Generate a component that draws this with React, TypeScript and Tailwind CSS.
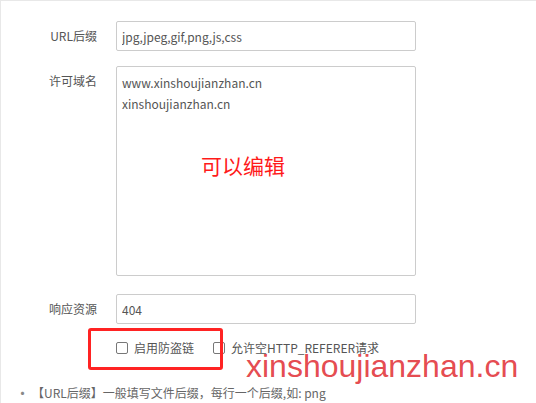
export default function App() {
  return (
    <div className="relative w-[536px] h-[403px] overflow-hidden bg-white border-t border-l border-[#e8e8e8] font-['Noto_Sans_CJK_SC',sans-serif] text-[12px] text-[#555]">
      <div className="flex flex-col pt-[20px]">
        {/* URL suffix */}
        <div className="flex items-start">
          <label className="w-[96px] text-right leading-[30px]">URL后缀</label>
          <input
            className="ml-[19px] w-[300px] h-[30px] border border-[#ccc] rounded-[2px] px-[5px] text-[#555] outline-none"
            defaultValue="jpg,jpeg,gif,png,js,css"
          />
        </div>

        {/* allowed domains */}
        <div className="flex items-start mt-[15px]">
          <label className="w-[96px] text-right leading-[30px]">许可域名</label>
          <div className="relative ml-[19px]">
            <textarea
              className="block w-[300px] h-[210px] border border-[#ccc] rounded-[2px] px-[5px] pt-[5px] leading-[21px] text-[#555] outline-none resize-none"
              defaultValue={"www.xinshoujianzhan.cn\nxinshoujianzhan.cn"}
            />
            <span className="absolute left-[85px] top-[89px] text-[21px] text-[#ff1a1a] leading-none">可以编辑</span>
          </div>
        </div>

        {/* response */}
        <div className="flex items-start mt-[18px]">
          <label className="w-[96px] text-right leading-[30px]">响应资源</label>
          <input
            className="ml-[19px] w-[300px] h-[30px] border border-[#ccc] rounded-[2px] px-[5px] text-[#555] outline-none"
            defaultValue="404"
          />
        </div>

        {/* options */}
        <div className="flex items-center mt-[15px] pl-[115px] h-[17px]">
          <span className="w-[12px] h-[12px] border border-[#777] rounded-[2px]" />
          <span className="ml-[6px]">启用防盗链</span>
          <span className="ml-[19px] w-[12px] h-[12px] border border-[#777] rounded-[2px]" />
          <span className="ml-[6px]">允许空HTTP_REFERER请求</span>
        </div>

        {/* tips */}
        <ul className="mt-[28px] pl-[14px] text-[#666]">
          <li className="flex items-center leading-[18px]">
            <span className="w-[17px] text-[15px] leading-[18px] text-[#888]">•</span>
            <span>【URL后缀】一般填写文件后缀，每行一个后缀,如: png</span>
          </li>
        </ul>
      </div>

      {/* highlight box */}
      <div className="absolute left-[87px] top-[327px] w-[135px] h-[42px] border-[3px] border-[#ff2323] rounded-[3px]" />

      {/* watermark */}
      <div className="absolute left-[245px] top-[349px] font-['Liberation_Sans',Arial,sans-serif] text-[32px] leading-[32px] text-[#e2343a]/90">
        xinshoujianzhan.cn
      </div>
    </div>
  );
}
